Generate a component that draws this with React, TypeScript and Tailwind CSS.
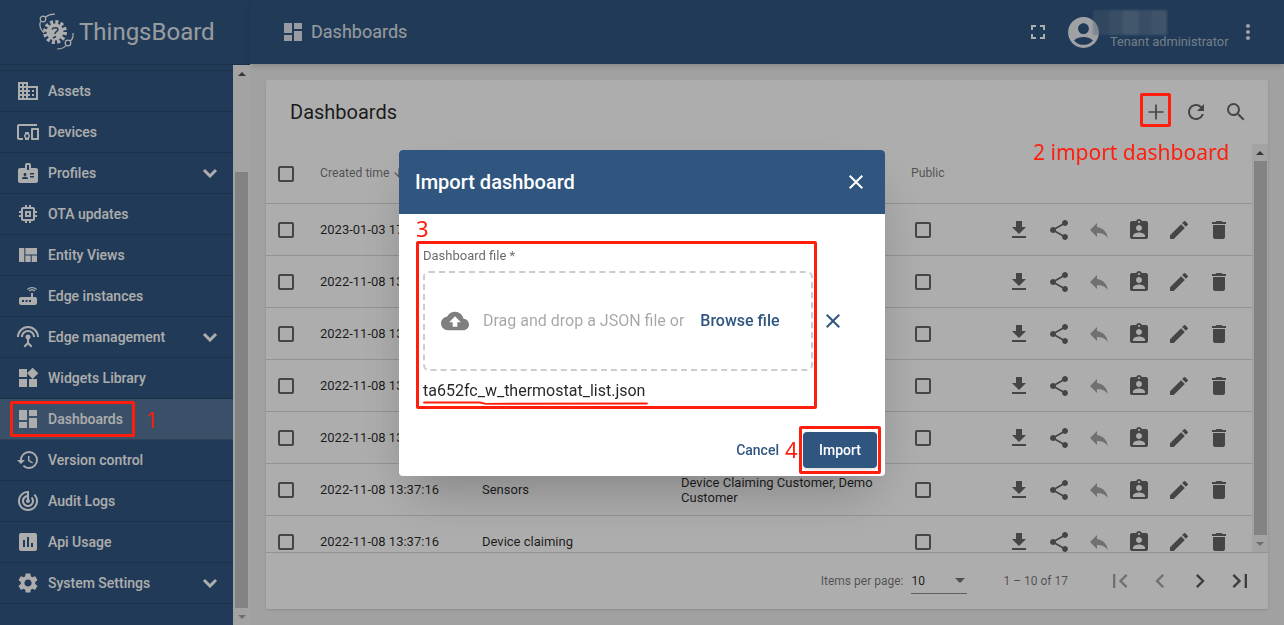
import * as React from "react";
import {
  MdAccountCircle,
  MdArrowDownward,
  MdAssignmentInd,
  MdBadge,
  MdChevronLeft,
  MdChevronRight,
  MdClose,
  MdCloudUpload,
  MdDashboard,
  MdDelete,
  MdDevicesOther,
  MdDomain,
  MdEdit,
  MdFileDownload,
  MdFirstPage,
  MdFullscreen,
  MdHistory,
  MdInsertChart,
  MdLastPage,
  MdMemory,
  MdMoreVert,
  MdRefresh,
  MdReply,
  MdRouter,
  MdSearch,
  MdSettings,
  MdSettingsInputAntenna,
  MdShare,
  MdTrackChanges,
  MdViewQuilt,
  MdWidgets,
} from "react-icons/md";

const menu = [
  { label: "Assets", icon: MdDomain },
  { label: "Devices", icon: MdDevicesOther },
  { label: "Profiles", icon: MdBadge, more: true },
  { label: "OTA updates", icon: MdMemory },
  { label: "Entity Views", icon: MdViewQuilt },
  { label: "Edge instances", icon: MdRouter },
  { label: "Edge management", icon: MdSettingsInputAntenna, more: true },
  { label: "Widgets Library", icon: MdWidgets },
  { label: "Dashboards", icon: MdDashboard, active: true },
  { label: "Version control", icon: MdHistory },
  { label: "Audit Logs", icon: MdTrackChanges },
  { label: "Api Usage", icon: MdInsertChart },
  { label: "System Settings", icon: MdSettings, more: true },
];

// rows 1-5 sit behind the dialog, only the start of the date shows
const rows = [
  { time: "2023-01-03 17", title: "", customers: "" },
  { time: "2022-11-08 13", title: "", customers: "" },
  { time: "2022-11-08 13", title: "", customers: "" },
  { time: "2022-11-08 13", title: "", customers: "" },
  { time: "2022-11-08 13", title: "", customers: "" },
  { time: "2022-11-08 13:37:16", title: "Sensors", customers: "Device Claiming Customer, Demo Customer" },
  { time: "2022-11-08 13:37:16", title: "Device claiming", customers: "" },
];

const gridCols = "grid grid-cols-[54px_162px_199px_230px_88px_240px]";

function Logo() {
  return (
    <svg width="40" height="40" viewBox="0 0 40 40" fill="none" className="shrink-0">
      <circle cx="18" cy="20" r="8.500" fill="#fff" />
      <circle cx="18" cy="20" r="10" stroke="#fff" strokeWidth="4" strokeDasharray="3 2.240" />
      <path d="M15 17.500c1-2.500 6-2.500 6 0 0 2-3 2-3 4.500M16 26l3-1.500" stroke="#305680" strokeWidth="1.500" />
      <circle cx="6" cy="7" r="2.800" stroke="#fff" strokeWidth="1.200" />
      <path d="M8.500 5C11 3 14 2 18 2.200M3.500 9.500C2 13 3.500 17.500 7 21" stroke="#fff" strokeWidth="1.200" />
      <circle cx="31" cy="31" r="2.800" stroke="#fff" strokeWidth="1.200" />
      <path d="M29 33.500C27 36 24 37 20 37M33.500 29C36 26.500 36.500 24 36 21" stroke="#fff" strokeWidth="1.200" />
    </svg>
  );
}

function Chevron() {
  return (
    <svg width="16" height="10" viewBox="0 0 16 10" fill="none" stroke="currentColor" strokeWidth="3">
      <path d="M2 2l6 6 6-6" />
    </svg>
  );
}

function Check({ className = "" }: { className?: string }) {
  return <div className={`size-4 rounded-[2px] border-2 border-black/60 ${className}`} />;
}

function Scrollbar({ className, thumbTop }: { className: string; thumbTop: string }) {
  return (
    <div className={`flex shrink-0 flex-col items-center bg-[#f1f1f1] ${className}`}>
      <div className="flex h-[17px] w-full shrink-0 items-center justify-center">
        <div className="size-0 border-x-[4px] border-b-[4px] border-x-transparent border-b-[#505050]" />
      </div>
      <div className={`w-[13px] shrink-0 ${thumbTop}`} />
      <div className="w-[13px] flex-1 bg-[#c1c1c1]" />
      <div className="flex h-[17px] w-full shrink-0 items-center justify-center">
        <div className="size-0 border-x-[4px] border-t-[4px] border-x-transparent border-t-[#a3a3a3]" />
      </div>
    </div>
  );
}

function Sidebar() {
  return (
    <aside className="flex h-full w-[250px] shrink-0 flex-col bg-[#305680]">
      <div className="flex h-[65px] shrink-0 items-center border-b border-black/15 pl-[37px]">
        <Logo />
        <span className="ml-[2px] text-2xl leading-none text-white/85">ThingsBoard</span>
      </div>
      <div className="flex min-h-0 flex-1">
        <nav className="w-[233px] shrink-0 overflow-hidden">
          <div className="h-[6px] border-b border-black/15" />
          {menu.map((m) => (
            <div
              key={m.label}
              className={`flex h-[41px] items-center border-b border-black/15 pl-4 pr-[15px] text-sm font-medium text-white ${
                m.active ? "bg-[#55769a]" : ""
              }`}
            >
              <m.icon size={24} className="mr-2 shrink-0" />
              <span className="flex-1 whitespace-nowrap">{m.label}</span>
              {m.more && <Chevron />}
            </div>
          ))}
        </nav>
        <Scrollbar className="w-[17px]" thumbTop="h-[90px]" />
      </div>
    </aside>
  );
}

function TopBar() {
  return (
    <header className="relative z-10 flex h-16 shrink-0 items-center bg-[#305680] pl-[31px] pr-6 text-white shadow-md">
      <MdDashboard size={24} className="text-white/85" />
      <span className="ml-[6px] text-lg text-white/85">Dashboards</span>
      <MdFullscreen size={24} className="ml-auto mr-[15px]" />
      <MdAccountCircle size={37} className="mr-2 text-white/90" />
      <div className="flex w-[124px] flex-col items-start self-stretch pt-[34px]">
        <span className="whitespace-nowrap text-[12.800px] leading-[15px] text-white/60">Tenant administrator</span>
      </div>
      <MdMoreVert size={24} className="ml-[2px] text-white/90" />
      <div className="absolute left-[843px] top-[10px] flex h-[25px] opacity-40 blur-[1px]">
        <div className="w-[16px] bg-[#6d86a2]" />
        <div className="w-[14px] bg-[#8ea2b8]" />
        <div className="w-[15px] bg-[#b3c1d1]" />
        <div className="w-[14px] bg-[#8ea2b8]" />
        <div className="w-[15px] bg-[#a3b3c6]" />
      </div>
    </header>
  );
}

function ActionIcons() {
  const icons = [MdFileDownload, MdShare, MdReply, MdAssignmentInd, MdEdit, MdDelete];
  return (
    <>
      {icons.map((Icon, i) => (
        <div key={i} className="flex items-center justify-center">
          <Icon size={24} className={Icon === MdReply ? "text-black/35" : "text-black/60"} />
        </div>
      ))}
    </>
  );
}

function DashboardsCard() {
  return (
    <section className="flex min-h-0 flex-1 flex-col rounded-[2px] bg-white shadow">
      <div className="flex h-16 shrink-0 items-center pl-6 pr-3">
        <h1 className="flex-1 text-xl text-black/85">Dashboards</h1>
        <div className="flex size-10 items-center justify-center">
          <svg width="24" height="24" viewBox="0 0 24 24" fill="none" stroke="currentColor" strokeWidth="1.700" className="text-black/60">
            <path d="M12 4.500v15M4.500 12h15" />
          </svg>
        </div>
        <div className="flex size-10 items-center justify-center">
          <MdRefresh size={24} className="text-black/60" />
        </div>
        <div className="flex size-10 items-center justify-center">
          <MdSearch size={24} className="text-black/60" />
        </div>
      </div>
      <div className="flex min-h-0 flex-1 overflow-hidden">
        <div className="min-w-0 flex-1 overflow-hidden">
          <div className={`${gridCols} h-[60px] items-center border-b border-black/15 text-[12.200px] text-black/55`}>
            <Check className="ml-3" />
            <span className="flex items-center">
              Created time
              <MdArrowDownward size={14} className="ml-[2px]" />
            </span>
            <span />
            <span />
            <span>Public</span>
          </div>
          {rows.map((r, i) => (
            <div
              key={i}
              className={`${gridCols} h-[52px] items-center border-b border-black/15 text-[13px] leading-[15px] text-black/85`}
            >
              <Check className="ml-3" />
              <span>{r.time}</span>
              <span>{r.title}</span>
              <span className="pr-1">{r.customers}</span>
              <Check className="ml-1" />
              <div className="grid grid-cols-6">
                <ActionIcons />
              </div>
            </div>
          ))}
        </div>
        <Scrollbar className="w-4" thumbTop="h-0" />
      </div>
      <div className="flex h-[57px] shrink-0 items-center border-t border-black/15 pr-2 text-xs text-black/55">
        <span className="ml-auto">Items per page:</span>
        <div className="ml-2 flex h-[26px] w-14 items-center justify-between border-b border-black/45 pr-[2px] text-black/85">
          <span>10</span>
          <div className="size-0 border-x-[5px] border-t-[5px] border-x-transparent border-t-black/55" />
        </div>
        <span className="ml-9 mr-[32px]">1 – 10 of 17</span>
        <div className="flex size-10 items-center justify-center">
          <MdFirstPage size={28} className="text-black/35" />
        </div>
        <div className="flex size-10 items-center justify-center">
          <MdChevronLeft size={28} className="text-black/35" />
        </div>
        <div className="flex size-10 items-center justify-center">
          <MdChevronRight size={28} className="text-black/65" />
        </div>
        <div className="flex size-10 items-center justify-center">
          <MdLastPage size={28} className="text-black/65" />
        </div>
      </div>
    </section>
  );
}

function ImportDialog() {
  return (
    <div className="fixed inset-0 z-20 flex items-center justify-center bg-black/32">
      <div className="w-[486px] overflow-hidden rounded bg-white shadow-2xl">
        <div className="flex h-16 items-center justify-between bg-[#305680] pl-4 pr-[17px] text-white">
          <h2 className="text-xl font-medium">Import dashboard</h2>
          <MdClose size={24} />
        </div>
        <div className="px-6 pt-[35px]">
          <div className="text-[13px] leading-[14px] text-black/60">Dashboard file *</div>
          <div className="mt-2 flex items-center">
            <div className="flex h-[100px] w-[390px] items-center rounded-md border-2 border-dashed border-black/20 pl-4">
              <MdCloudUpload size={28} className="text-black/50" />
              <span className="ml-[14px] text-base text-black/35">Drag and drop a JSON file or</span>
              <span className="ml-4 text-base font-medium text-[#305680]">Browse file</span>
            </div>
            <MdClose size={24} className="ml-2 text-[#305680]" />
          </div>
          <div className="mt-[9px] text-base leading-[22px] text-black/85">ta652fc_w_thermostat_list.json</div>
        </div>
        <div className="mt-[30px] flex items-center justify-end pb-2 pr-2">
          <span className="text-sm font-medium text-[#305680]">Cancel</span>
          <button className="ml-6 h-9 w-[74px] rounded bg-[#305680] text-sm font-medium text-white shadow-md">
            Import
          </button>
        </div>
      </div>
    </div>
  );
}

function Annotations() {
  const note = "absolute text-[#ff1e0e] leading-none";
  const box = "absolute rounded-[2px] border-[3px] border-[#ff1e0e]";
  return (
    <div className="pointer-events-none fixed inset-0 z-30 font-['Noto_Sans',sans-serif]">
      <div className={`${box} left-[10px] top-[401px] h-[36px] w-[125px]`} />
      <span className={`${note} left-[146px] top-[408px] text-[22px]`}>1</span>
      <div className={`${box} left-[1140px] top-[93px] h-[34px] w-[31px]`} />
      <span className={`${note} left-[1033px] top-[142px] whitespace-nowrap text-[21px]`}>2 import dashboard</span>
      <span className={`${note} left-[416px] top-[217px] text-[22px]`}>3</span>
      <div className={`${box} left-[416px] top-[241px] h-[168px] w-[401px]`} />
      <span className={`${note} left-[785px] top-[438px] text-[22px]`}>4</span>
      <div className={`${box} left-[799px] top-[426px] h-[48px] w-[82px]`} />
      <svg width="230" height="6" viewBox="0 0 230 6" fill="none" className="absolute left-[423px] top-[400px]">
        <path d="M1 2.500H56C60 2.500 60 4 64 3.800L224 3.500" stroke="#ff1e0e" strokeWidth="1.800" strokeLinecap="round" />
      </svg>
    </div>
  );
}

export default function App() {
  return (
    <div className="relative flex h-[625px] w-[1284px] overflow-hidden bg-[#eeeeee] font-['Roboto',sans-serif]">
      <Sidebar />
      <main className="flex min-w-0 flex-1 flex-col">
        <TopBar />
        <div className="flex min-h-0 flex-1 p-4">
          <DashboardsCard />
        </div>
      </main>
      <ImportDialog />
      <Annotations />
    </div>
  );
}
